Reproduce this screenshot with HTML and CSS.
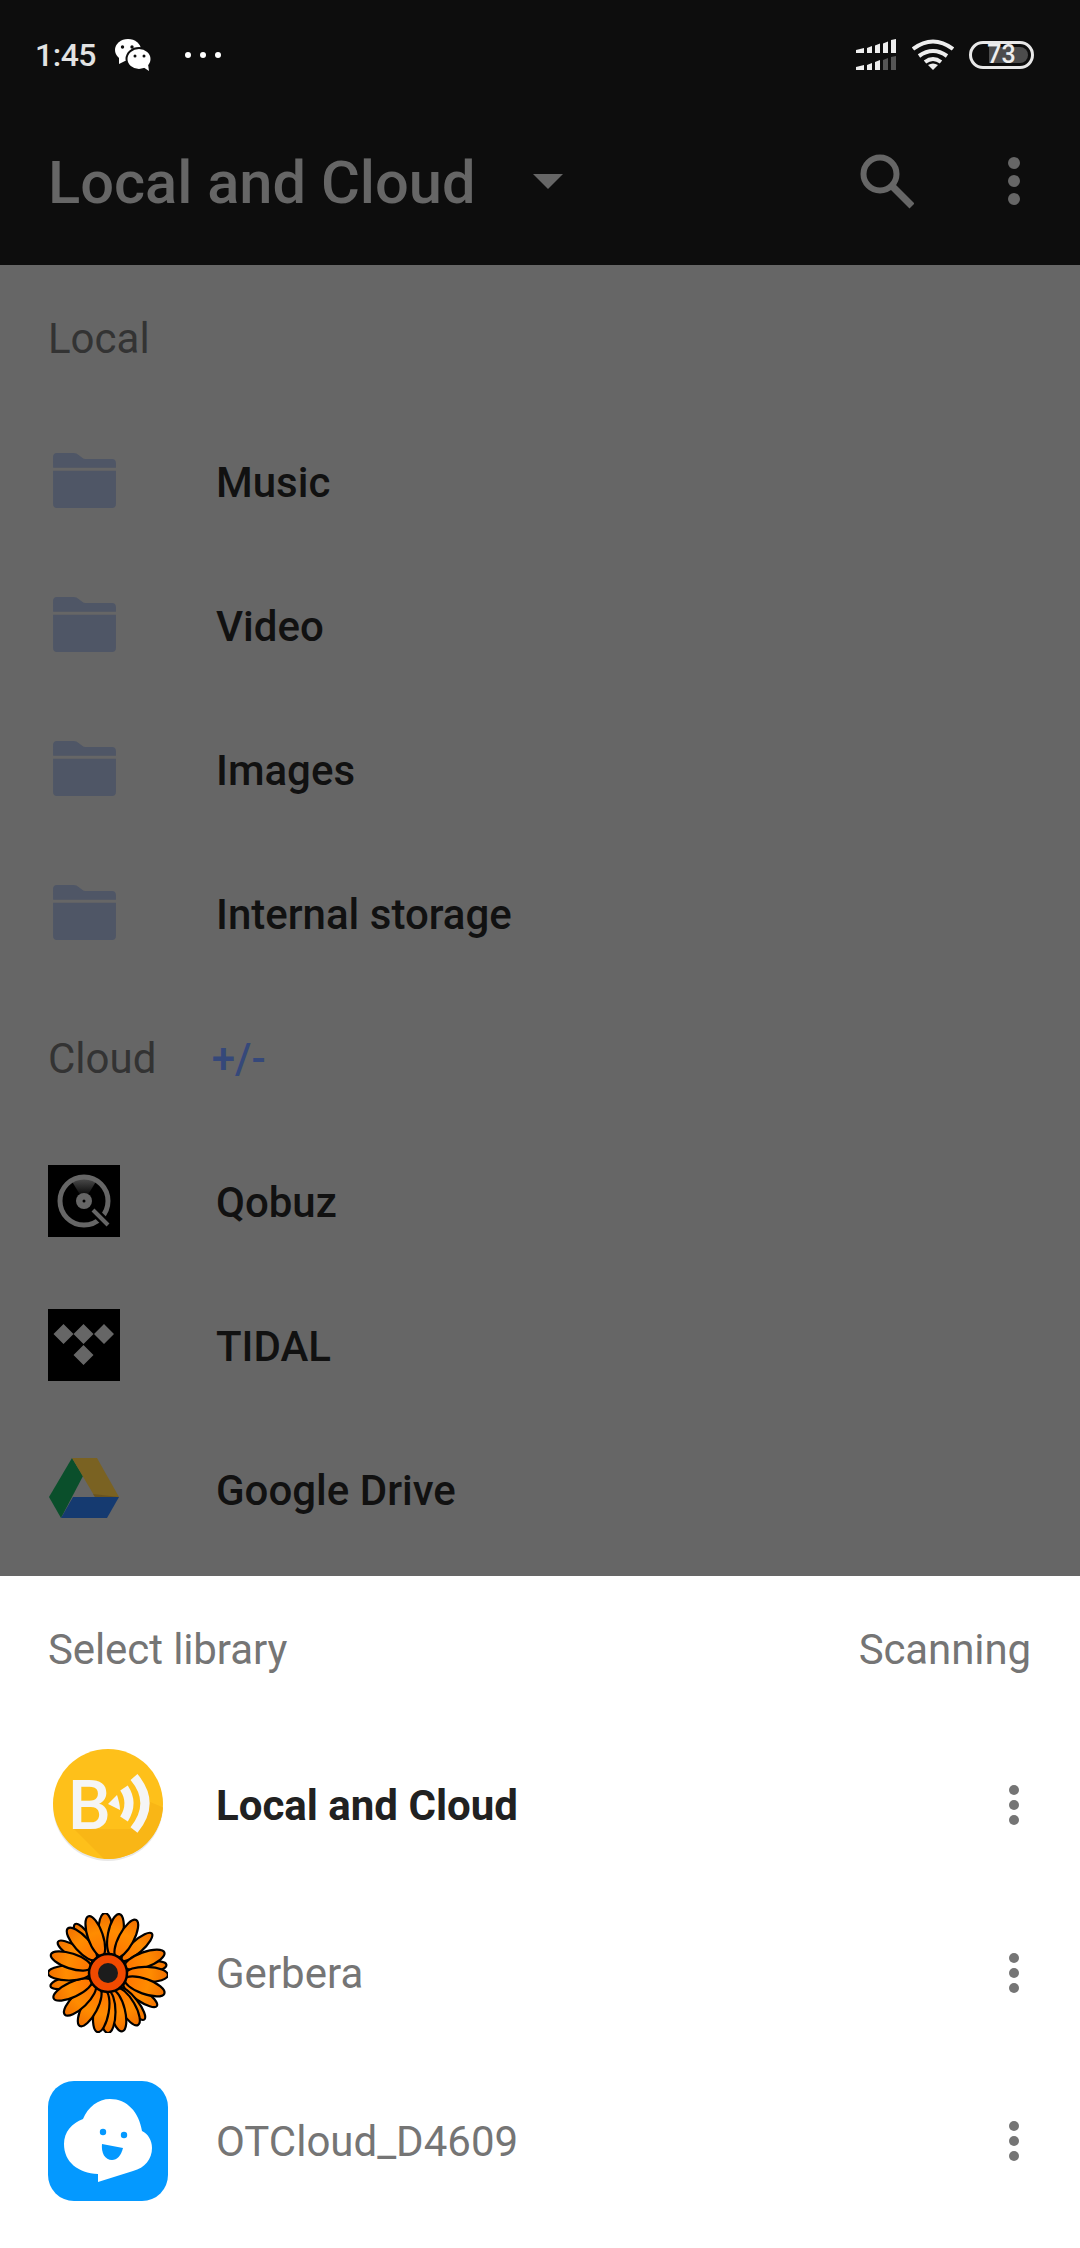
FILE: index.html
```html
<!DOCTYPE html>
<html>

<head lang="en">
    <meta charset="UTF-8">
    <title>Local and Cloud</title>
    <link rel="stylesheet" href="styles.css">
</head>

<body>
<div class="phone">
    <!-- top bar -->
    <div class="top">
        <div class="status">
            <span class="time">1:45</span>
            <svg class="wechat" width="36" height="32" viewBox="0 0 36 32">
                <ellipse cx="13" cy="11" rx="13" ry="11" fill="#fff"/>
                <path d="M4 17v8l8-4z" fill="#fff"/>
                <ellipse cx="24" cy="20" rx="12.500" ry="11" fill="#fff" stroke="#0d0d0d" stroke-width="2"/>
                <path d="M28 28l6 4-1-7z" fill="#fff"/>
                <circle cx="7.500" cy="8" r="1.700" fill="#0d0d0d"/>
                <circle cx="17" cy="8" r="1.700" fill="#0d0d0d"/>
                <circle cx="20" cy="17" r="1.500" fill="#0d0d0d"/>
                <circle cx="29" cy="17" r="1.500" fill="#0d0d0d"/>
            </svg>
            <span class="dots"><i></i><i></i><i></i></span>
            <span class="grow"></span>
            <svg class="signal" width="40" height="31" viewBox="0 0 40 31">
                <path d="M0 11l8-2v5H0zM11 9l5-2v7h-5zM19 6.500l5-2V14h-5zM27 4.500l5-2V14h-5zM35 1l5-1v14h-5z" fill="#eee"/>
                <path d="M0 28l8-2v5H0zM11 26l5-2v7h-5zM19 23l5-2v10h-5z" fill="#eee"/>
                <path d="M27 21l5-2v12h-5zM35 18l5-1v14h-5z" fill="#555"/>
            </svg>
            <svg class="wifi" width="42" height="31" viewBox="0 0 42 31">
                <path d="M1 10Q21-5 41 10" fill="none" stroke="#eee" stroke-width="4"/>
                <path d="M7 17Q21 7 35 17" fill="none" stroke="#eee" stroke-width="4"/>
                <path d="M13 23q8-6 16 0" fill="none" stroke="#eee" stroke-width="4"/>
                <path d="M21 31l-5-5q5-3 10 0z" fill="#eee"/>
            </svg>
            <div class="battery">
                <div class="battery-fill"></div>
                <span class="battery-num">73</span>
            </div>
        </div>
        <div class="toolbar">
            <span class="toolbar-title">Local and Cloud</span>
            <span class="caret"></span>
            <span class="grow"></span>
            <svg class="search" width="56" height="56" viewBox="0 0 56 56">
                <circle cx="22" cy="21" r="16.500" fill="none" stroke="#666" stroke-width="6"/>
                <path d="M35 34l19 19" fill="none" stroke="#666" stroke-width="7"/>
            </svg>
            <span class="more more-dark"><i></i><i></i><i></i></span>
        </div>
    </div>

    <!-- dimmed library list -->
    <div class="browse">
        <div class="heading">Local</div>
        <div class="row">
            <div class="row-icon"><svg class="folder" width="63" height="55" viewBox="0 0 64 56"><path d="M0 15V4q0-4 4-4h17q3 0 5 2l4 3q1 1 3 1h27q4 0 4 4v5zM0 18h64v34q0 4-4 4H4q-4 0-4-4z" fill="#4f5666"/></svg></div>
            <span class="row-name">Music</span>
        </div>
        <div class="row">
            <div class="row-icon"><svg class="folder" width="63" height="55" viewBox="0 0 64 56"><path d="M0 15V4q0-4 4-4h17q3 0 5 2l4 3q1 1 3 1h27q4 0 4 4v5zM0 18h64v34q0 4-4 4H4q-4 0-4-4z" fill="#4f5666"/></svg></div>
            <span class="row-name">Video</span>
        </div>
        <div class="row">
            <div class="row-icon"><svg class="folder" width="63" height="55" viewBox="0 0 64 56"><path d="M0 15V4q0-4 4-4h17q3 0 5 2l4 3q1 1 3 1h27q4 0 4 4v5zM0 18h64v34q0 4-4 4H4q-4 0-4-4z" fill="#4f5666"/></svg></div>
            <span class="row-name">Images</span>
        </div>
        <div class="row">
            <div class="row-icon"><svg class="folder" width="63" height="55" viewBox="0 0 64 56"><path d="M0 15V4q0-4 4-4h17q3 0 5 2l4 3q1 1 3 1h27q4 0 4 4v5zM0 18h64v34q0 4-4 4H4q-4 0-4-4z" fill="#4f5666"/></svg></div>
            <span class="row-name">Internal storage</span>
        </div>
        <div class="heading">Cloud <span class="plus">+/-</span></div>
        <div class="row">
            <div class="row-icon">
                <svg width="72" height="72" viewBox="0 0 72 72">
                    <defs>
                        <linearGradient id="qobuz-disc" x1="0" y1="0" x2="0" y2="1">
                            <stop offset="0" stop-color="#555"/>
                            <stop offset="0.85" stop-color="#000"/>
                        </linearGradient>
                    </defs>
                    <rect width="72" height="72" fill="#000"/>
                    <path d="M36 36L23 15a24 24 0 0 1 26 0z" fill="url(#qobuz-disc)"/>
                    <circle cx="36" cy="36" r="24" fill="none" stroke="#666" stroke-width="5"/>
                    <circle cx="36" cy="36" r="8" fill="#666"/>
                    <circle cx="36" cy="36" r="1.500" fill="#000"/>
                    <path d="M43 43l18 18" stroke="#000" stroke-width="9"/>
                    <path d="M45 45l15 15" stroke="#666" stroke-width="4"/>
                </svg>
            </div>
            <span class="row-name">Qobuz</span>
        </div>
        <div class="row">
            <div class="row-icon">
                <svg width="72" height="72" viewBox="0 0 72 72">
                    <rect width="72" height="72" fill="#000"/>
                    <path d="M15.500 15l10 10-10 10-10-10zM35.500 15l10 10-10 10-10-10zM56 15l10 10-10 10-10-10zM35.500 36l10 10-10 10-10-10z" fill="#666"/>
                </svg>
            </div>
            <span class="row-name">TIDAL</span>
        </div>
        <div class="row">
            <div class="row-icon">
                <svg class="drive" width="70" height="60" viewBox="0 0 70 60">
                    <path d="M23 0L0 39l12 21 22-42z" fill="#0a4f2b"/>
                    <path d="M23 0h25l22 39H46z" fill="#7a6222"/>
                    <path d="M44 36l26 3H46z" fill="#6a5420"/>
                    <path d="M12 60l12-21h46L58 60z" fill="#153a70"/>
                </svg>
            </div>
            <span class="row-name">Google Drive</span>
        </div>
    </div>

    <!-- bottom sheet -->
    <div class="sheet">
        <div class="sheet-head">
            <span>Select library</span>
            <span>Scanning</span>
        </div>
        <div class="lib">
            <div class="lib-icon">
                <svg width="120" height="120" viewBox="0 0 120 120">
                    <defs>
                        <clipPath id="bubble-clip">
                            <circle cx="60" cy="59" r="55"/>
                        </clipPath>
                    </defs>
                    <circle cx="60" cy="61" r="55" fill="#e8e8e8"/>
                    <circle cx="60" cy="59" r="55" fill="#fec01a"/>
                    <path d="M26 84l46 46 60-60-32-14-16 28z" fill="#f9b616" clip-path="url(#bubble-clip)"/>
                    <text x="20" y="84" class="bubble-b">B</text>
                    <path d="M60 59l9-9q3 9 3 15z" fill="#f5f5f5"/>
                    <path d="M76 43q10 15 0 31" fill="none" stroke="#f5f5f5" stroke-width="9"/>
                    <path d="M86 32q22 26 0 53" fill="none" stroke="#f5f5f5" stroke-width="9"/>
                </svg>
            </div>
            <span class="lib-name lib-name-on">Local and Cloud</span>
            <span class="more"><i></i><i></i><i></i></span>
        </div>
        <div class="lib">
            <div class="lib-icon">
                <svg class="gerbera" width="120" height="120" viewBox="0 0 120 120">
                    <defs>
                        <radialGradient id="petal" cx="60" cy="60" r="60" gradientUnits="userSpaceOnUse">
                            <stop offset="0.3" stop-color="#ff7400"/>
                            <stop offset="0.7" stop-color="#ff8c00"/>
                            <stop offset="1" stop-color="#f27000"/>
                        </radialGradient>
                    </defs>
                    <g fill="url(#petal)" stroke="#000" stroke-width="2.200">
                        <ellipse cx="60" cy="21" rx="6" ry="20" transform="rotate(82 60 60)"/>
                        <ellipse cx="60" cy="21" rx="6" ry="20" transform="rotate(48 60 60)"/>
                        <ellipse cx="60" cy="21" rx="6" ry="20" transform="rotate(124 60 60)"/>
                        <ellipse cx="60" cy="21" rx="6" ry="20" transform="rotate(142 60 60)"/>
                        <ellipse cx="60" cy="21" rx="6" ry="20" transform="rotate(-34 60 60)"/>
                        <ellipse cx="60" cy="21" rx="6" ry="20" transform="rotate(-58 60 60)"/>
                        <ellipse cx="60" cy="21" rx="6" ry="20" transform="rotate(-103 60 60)"/>
                        <ellipse cx="60" cy="21" rx="7.500" ry="21" transform="rotate(-3 60 60)"/>
                        <ellipse cx="60" cy="21" rx="7.500" ry="21" transform="rotate(11 60 60)"/>
                        <ellipse cx="60" cy="21" rx="7.500" ry="21" transform="rotate(28 60 60)"/>
                        <ellipse cx="60" cy="21" rx="7.500" ry="21" transform="rotate(70 60 60)"/>
                        <ellipse cx="60" cy="21" rx="7.500" ry="21" transform="rotate(92 60 60)"/>
                        <ellipse cx="60" cy="21" rx="7.500" ry="21" transform="rotate(110 60 60)"/>
                        <ellipse cx="60" cy="21" rx="7.500" ry="21" transform="rotate(150 60 60)"/>
                        <ellipse cx="60" cy="21" rx="7.500" ry="21" transform="rotate(166 60 60)"/>
                        <ellipse cx="60" cy="21" rx="7.500" ry="21" transform="rotate(180 60 60)"/>
                        <ellipse cx="60" cy="21" rx="7.500" ry="21" transform="rotate(-170 60 60)"/>
                        <ellipse cx="60" cy="21" rx="7.500" ry="21" transform="rotate(-152 60 60)"/>
                        <ellipse cx="60" cy="21" rx="7.500" ry="21" transform="rotate(-134 60 60)"/>
                        <ellipse cx="60" cy="21" rx="7.500" ry="21" transform="rotate(-115 60 60)"/>
                        <ellipse cx="60" cy="21" rx="7.500" ry="21" transform="rotate(-90 60 60)"/>
                        <ellipse cx="60" cy="21" rx="7.500" ry="21" transform="rotate(-72 60 60)"/>
                        <ellipse cx="60" cy="21" rx="7.500" ry="21" transform="rotate(-42 60 60)"/>
                        <ellipse cx="60" cy="21" rx="7.500" ry="21" transform="rotate(-19 60 60)"/>
                    </g>
                    <circle cx="60" cy="60" r="19" fill="#f04a00" stroke="#000" stroke-width="2.500"/>
                    <circle cx="60" cy="60" r="10" fill="#1c1c1c"/>
                </svg>
            </div>
            <span class="lib-name">Gerbera</span>
            <span class="more"><i></i><i></i><i></i></span>
        </div>
        <div class="lib">
            <div class="lib-icon">
                <svg width="120" height="120" viewBox="0 0 120 120">
                    <rect width="120" height="120" rx="26" fill="#0499ff"/>
                    <path d="M50 101v-8C30 92 16 81 16 63c0-12 8-21 19-25 5-12 15-20 27-20 17 0 29 13 32 32 6 3 10 9 10 17 0 11-7 20-19 23z" fill="#fff"/>
                    <circle cx="55" cy="51" r="3.200" fill="#0499ff"/>
                    <circle cx="76" cy="54" r="3.200" fill="#0499ff"/>
                    <path d="M54 63l21 4c-2 8-6 12-11 12-7 0-11-7-10-16z" fill="#0499ff"/>
                </svg>
            </div>
            <span class="lib-name">OTCloud_D4609</span>
            <span class="more"><i></i><i></i><i></i></span>
        </div>
    </div>
</div>
</body>

</html>
```

FILE: styles.css
```css
* {
    padding: 0;
    margin: 0;
    box-sizing: border-box;
}

body {
    font-family: Roboto, "Liberation Sans", sans-serif;
    background-color: #666;
}

.phone {
    display: flex;
    flex-direction: column;
    width: 1080px;
    height: 2248px;
    overflow: hidden;
}

.grow {
    flex: 1;
}

/* status bar and toolbar */
.top {
    height: 265px;
    background-color: #0d0d0d;
}

.status {
    display: flex;
    align-items: center;
    height: 106px;
    padding: 3px 46px 0 35px;
}

.time {
    font-size: 32px;
    font-weight: 500;
    letter-spacing: -0.5px;
    color: #e2e2e2;
}

.wechat {
    margin-left: 19px;
}

.dots {
    display: flex;
    gap: 9px;
    margin-left: 34px;
}

.dots i {
    width: 6px;
    height: 6px;
    border-radius: 50%;
    background-color: #fff;
}

.signal {
    margin-right: 16px;
}

.wifi {
    margin-right: 15px;
}

.battery {
    position: relative;
    display: flex;
    justify-content: center;
    align-items: center;
    width: 65px;
    height: 28px;
    border: 3px solid #e8e8e8;
    border-radius: 14px;
}

.battery-fill {
    position: absolute;
    top: 3px;
    bottom: 3px;
    left: 17px;
    right: 3px;
    border-radius: 0 8px 8px 0;
    background-color: #4c4c4c;
}

.battery-num {
    position: relative;
    font-size: 25px;
    font-weight: 500;
    line-height: 22px;
    color: #eee;
}

.toolbar {
    display: flex;
    align-items: center;
    height: 150px;
    padding: 0 60px 0 48px;
}

.toolbar-title {
    margin-top: 4px;
    font-size: 59.6px;
    font-weight: 500;
    color: #666;
}

.caret {
    width: 0;
    height: 0;
    margin-left: 57px;
    border-left: 15px solid transparent;
    border-right: 15px solid transparent;
    border-top: 15px solid #666;
}

.search {
    margin-right: 94px;
}

.more {
    display: flex;
    flex-direction: column;
    gap: 5px;
    width: 10px;
}

.more i {
    width: 10px;
    height: 10px;
    border-radius: 50%;
    background-color: #757575;
}

.more-dark {
    gap: 6px;
    width: 12px;
}

.more-dark i {
    width: 12px;
    height: 12px;
    background-color: #666;
}

/* dimmed list */
.browse {
    height: 1311px;
    padding-top: 1px;
    background-color: #666;
}

.heading {
    height: 144px;
    padding: 51px 0 0 48px;
    font-size: 42px;
    line-height: 44px;
    color: #333;
}

.plus {
    margin-left: 45px;
    font-weight: 500;
    color: #35487a;
}

.row {
    display: flex;
    align-items: center;
    height: 144px;
}

.row-icon {
    display: flex;
    justify-content: center;
    width: 72px;
    margin-left: 48px;
    margin-top: -2px;
}

.folder {
    margin-top: -2px;
}

.drive {
    margin-top: -2px;
}

.row-name {
    margin-left: 96px;
    font-size: 42px;
    font-weight: 500;
    color: #111;
}

/* bottom sheet */
.sheet {
    flex: 1;
    background-color: #fff;
}

.sheet-head {
    display: flex;
    justify-content: space-between;
    height: 145px;
    padding: 50px 49px 0 48px;
    font-size: 42px;
    letter-spacing: -0.1px;
    line-height: 48px;
    color: #757575;
}

.lib {
    display: flex;
    align-items: center;
    height: 168px;
    padding-right: 61px;
}

.lib-icon {
    width: 120px;
    height: 120px;
    margin-left: 48px;
}

.lib-name {
    flex: 1;
    margin-left: 48px;
    font-size: 42px;
    color: #757575;
}

.lib-name-on {
    font-weight: 700;
    color: #212121;
}

.bubble-b {
    font-size: 68px;
    font-weight: 500;
    fill: #f5f5f5;
}
```
